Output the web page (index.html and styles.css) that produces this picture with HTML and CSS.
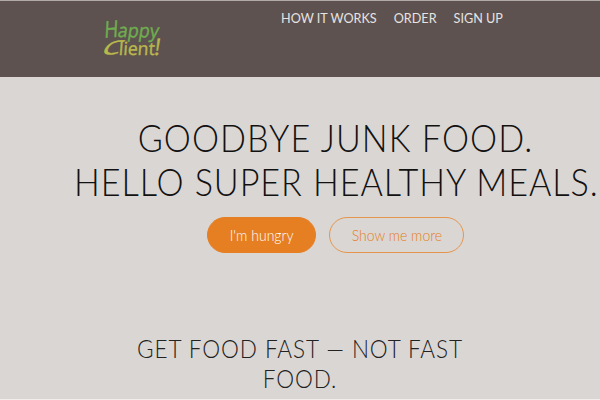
FILE: index.html
```html
<!DOCTYPE html>
<html lang="en">
<head>
<meta charset="utf-8">
<title>Happy Client</title>
<link rel="stylesheet" href="styles.css">
</head>
<body>
<header class="header">
  <svg class="logo" width="64" height="46" viewBox="0 0 64 46" role="img" aria-label="Happy Client!">
    <g class="logo-top">
      <text font-size="23" transform="translate(4 20) rotate(-5) skewX(-8)" textLength="14" lengthAdjust="spacingAndGlyphs">H</text>
      <text font-size="19" transform="translate(17 19) rotate(1) skewX(-8)" textLength="41" lengthAdjust="spacingAndGlyphs">appy</text>
    </g>
    <g class="logo-bottom">
      <text font-size="18" transform="translate(0 37.5) rotate(-6) skewX(-34)" textLength="19" lengthAdjust="spacingAndGlyphs">C</text>
      <text font-size="18" transform="translate(18.5 37) skewX(-4)" textLength="36" lengthAdjust="spacingAndGlyphs">lient</text>
      <text font-size="23" transform="translate(53.5 37) skewX(-8)">!</text>
    </g>
  </svg>
  <nav class="nav">
    <a>HOW IT WORKS</a>
    <a>ORDER</a>
    <a>SIGN UP</a>
  </nav>
</header>
<main>
  <section class="hero">
    <h1><span class="lead">GOODBYE JUNK FOOD.</span><br>HELLO SUPER HEALTHY MEALS.</h1>
    <div class="actions">
      <a class="btn btn-full"><span>I'm hungry</span></a>
      <a class="btn btn-ghost"><span>Show me more</span></a>
    </div>
  </section>
  <section class="features">
    <h2>GET FOOD FAST — NOT FAST FOOD.</h2>
  </section>
</main>
</body>
</html>
```
FILE: styles.css
```css
* { box-sizing: border-box; margin: 0; padding: 0; }
body {
  height: 400px;
  overflow: hidden;
  background: #dad6d3;
  border-bottom: 1px solid #efeeed;
  font-family: Lato, "Liberation Sans", sans-serif;
  font-weight: 300;
  color: #111;
}
.header {
  display: flex;
  align-items: flex-start;
  height: 77px;
  padding-left: 100px;
  background: #5d5250;
  border-top: 1px solid #b0aaa8;
}
.logo { margin-top: 17px; flex: none; overflow: visible; }
.logo text {
  font-family: "Open Sans", "Noto Sans", sans-serif;
  font-weight: 400;
}
.logo-top { fill: #6fae4e; stroke: #6fae4e; stroke-width: .4; }
.logo-bottom { fill: #b9b84c; stroke: #b9b84c; stroke-width: .4; }
.nav {
  display: flex;
  gap: 17.5px;
  margin: 9px 0 0 117px;
  font-size: 13px;
  font-weight: 400;
  line-height: 17px;
  color: #e6e3e1;
  white-space: nowrap;
  transform: scaleX(.972);
  transform-origin: left;
}
.hero { height: 238px; padding: 39px 0 0 74px; }
h1 {
  width: 566px;
  font-size: 37px;
  font-weight: 300;
  line-height: 43.5px;
  letter-spacing: 1px;
  text-align: center;
  white-space: nowrap;
  transform: scaleX(.924);
  transform-origin: left;
}
.lead { letter-spacing: 1.15px; }
.actions {
  display: flex;
  gap: 13px;
  margin: 14px 0 0 133px;
}
.btn {
  display: flex;
  align-items: center;
  justify-content: center;
  height: 36px;
  border: 1px solid #e67e22;
  border-radius: 18px;
  font-size: 15px;
  white-space: nowrap;
}
.btn span { transform: translateX(.5px) scaleX(.935); }
.btn-full { width: 109px; background: #e67e22; color: #fff; }
.btn-ghost { width: 135px; color: #e67e22; border-color: #e6954c; }
.features { padding-top: 18px; }
h2 {
  width: 370px;
  margin: 0 auto;
  font-size: 25px;
  font-weight: 300;
  line-height: 30px;
  letter-spacing: 1px;
  text-align: center;
  color: #222;
  transform: scaleX(.902);
}
```
